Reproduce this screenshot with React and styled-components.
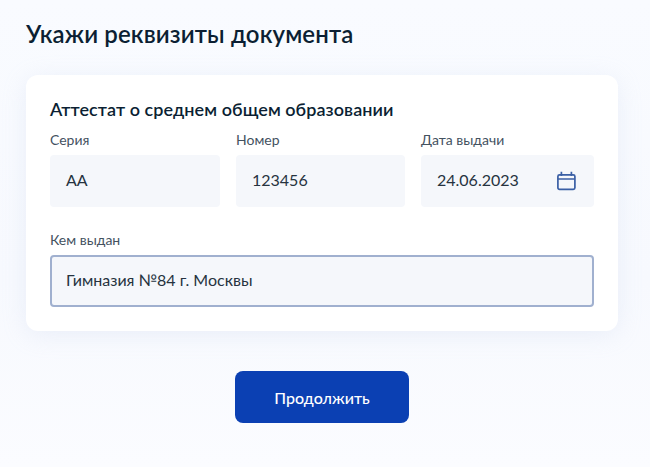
import React from "react";
import styled, { createGlobalStyle } from "styled-components";

const Global = createGlobalStyle`
  html, body { margin: 0; padding: 0; }
  body { background: #fff; font-family: "Lato", "Noto Sans", sans-serif; }
`;

const Page = styled.div`
  width: 650px;
  height: 467px;
  box-sizing: border-box;
  overflow: hidden;
  padding: 20px 32px 0 26px;
  background: linear-gradient(180deg, #f9fbff 0%, #f7f9fe 60%, #fbfcff 100%);
  display: flex;
  flex-direction: column;
`;

const Title = styled.h1`
  margin: 0 0 27px;
  height: 28px;
  font-size: 24px;
  line-height: 28px;
  font-weight: 600;
  letter-spacing: 0.12px;
  color: #0b1f33;
`;

const Card = styled.section`
  box-sizing: border-box;
  height: 256px;
  padding: 23px 24px 0;
  background: #fff;
  border-radius: 12px;
  box-shadow: 0 4px 24px rgba(180, 195, 225, 0.2);
`;

const CardTitle = styled.h2`
  margin: 0 0 11px;
  font-size: 18px;
  line-height: 22px;
  font-weight: 600;
  letter-spacing: 0.06px;
  color: #0b1f33;
`;

const Row = styled.div`
  display: grid;
  grid-template-columns: 170px 169px 173px;
  column-gap: 16px;
  margin-bottom: 24px;
`;

const Field = styled.div`
  display: flex;
  flex-direction: column;
`;

const Label = styled.label`
  height: 18px;
  margin-bottom: 6px;
  font-size: 14px;
  line-height: 18px;
  color: #44525f;
`;

const Input = styled.div`
  box-sizing: border-box;
  height: 52px;
  padding: ${(p) => (p.$focused ? "0 14px 2px" : "0 18px 2px 16px")};
  display: flex;
  align-items: center;
  justify-content: space-between;
  font-size: 16px;
  line-height: 20px;
  color: #26333f;
  background: #f5f7fb;
  border-radius: 4px;
  border: ${(p) => (p.$focused ? "2px solid #a0b0cf" : "none")};
`;

const CalendarGlyph = styled.svg`
  margin-top: 2px;
  flex: none;
`;

const Actions = styled.div`
  display: flex;
  justify-content: center;
  padding: 40px 0 0;
`;

const Button = styled.button`
  width: 174px;
  height: 52px;
  border: none;
  border-radius: 8px;
  background: #0b40b3;
  color: #fff;
  font: 500 16px "Lato", sans-serif;
`;

const CalendarIcon = () => (
  <CalendarGlyph width="19" height="20" viewBox="0 0 19 20" fill="none" stroke="#3a5fa5" strokeWidth="1.7">
    <rect x="0.9" y="3.8" width="17" height="14.5" rx="1.6" />
    <path d="M0.9 8h17M4.4 0.7v4.4M14.4 0.7v4.4" />
  </CalendarGlyph>
);

export default function App() {
  return (
    <Page>
      <Global />
      <Title>Укажи реквизиты документа</Title>
      <Card>
        <CardTitle>Аттестат о среднем общем образовании</CardTitle>
        <Row>
          <Field>
            <Label>Серия</Label>
            <Input>АА</Input>
          </Field>
          <Field>
            <Label>Номер</Label>
            <Input>123456</Input>
          </Field>
          <Field>
            <Label>Дата выдачи</Label>
            <Input>
              24.06.2023
              <CalendarIcon />
            </Input>
          </Field>
        </Row>
        <Field>
          <Label>Кем выдан</Label>
          <Input $focused>Гимназия №84 г. Москвы</Input>
        </Field>
      </Card>
      <Actions>
        <Button>Продолжить</Button>
      </Actions>
    </Page>
  );
}
